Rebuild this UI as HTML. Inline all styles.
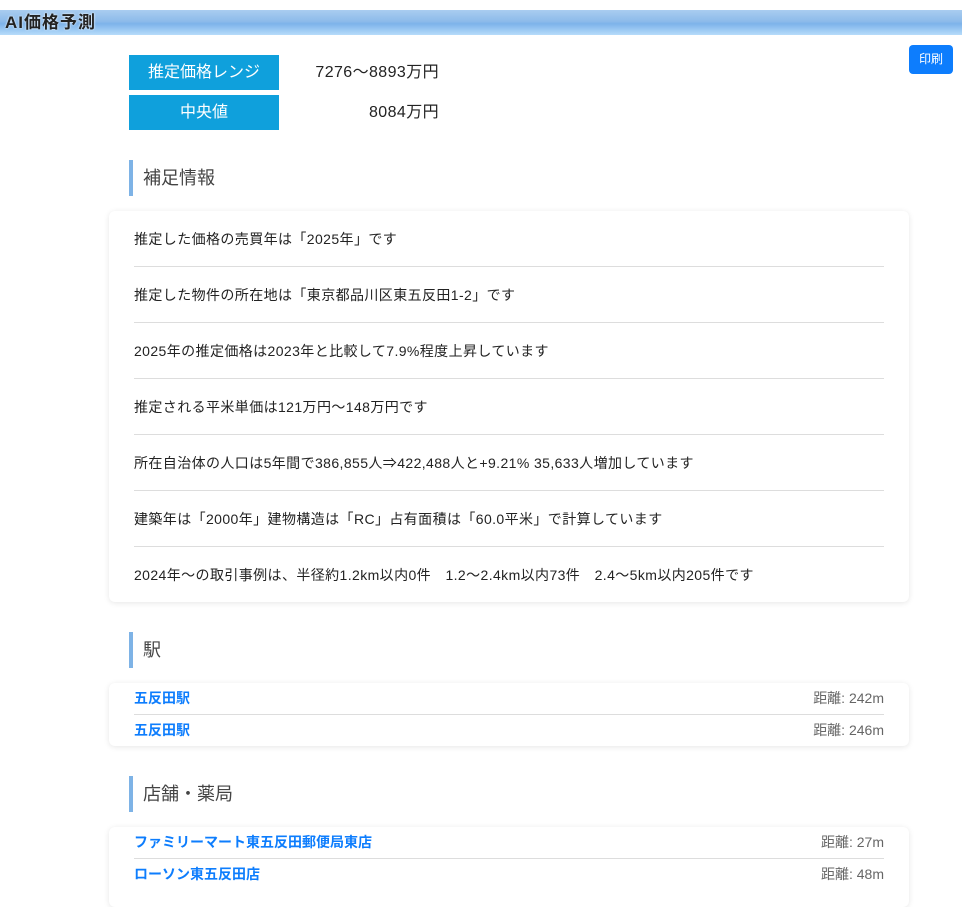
<!DOCTYPE html>
<html><head><meta charset="utf-8"><style>
*{margin:0;padding:0;box-sizing:border-box}
body{width:962px;height:889px;overflow:hidden;background:#fff;font-family:"Liberation Sans","Noto Sans CJK JP",sans-serif;color:#333;position:relative}
.hdr{position:absolute;left:0;top:10px;width:962px;height:25px;background:linear-gradient(#a9cdf0 0%,#8dbbea 45%,#7db3ea 55%,#b6dcfa 100%);font-weight:bold;font-size:17px;line-height:25px;padding-left:5px;color:#222;text-shadow:0 0 2px #fff;letter-spacing:1px}
.print{position:absolute;left:909px;top:45px;width:44px;height:29px;background:#0d7dfd;color:#fff;border-radius:4px;font-size:12px;line-height:29px;text-align:center}
.lab{position:absolute;left:129px;width:150px;height:35px;background:#0fa0dc;color:#fff;font-size:16px;line-height:35px;text-align:center}
.val{position:absolute;left:280px;width:159px;text-align:right;font-size:16px;line-height:35px;color:#222;letter-spacing:0.4px}
.sec{position:absolute;left:129px;height:36px;border-left:4px solid #7eb3e6;padding-left:10px;font-size:18px;line-height:36px;color:#444}
.card{position:absolute;left:109px;width:800px;background:#fff;border-radius:6px;box-shadow:0 1px 6px rgba(0,0,0,.1);padding:0 25px}
.row{height:56px;line-height:56px;font-size:14px;color:#222;border-bottom:1px solid #ddd;letter-spacing:0.4px}
.row:last-child{border-bottom:none}
.r2{height:32px;line-height:31px;font-size:14px;border-bottom:1px solid #ddd;display:flex;justify-content:space-between}
.r2:last-child{border-bottom:none}
.r2 a{color:#0d7dfd;font-weight:bold;text-decoration:none}
.r2 span{color:#666}
</style></head><body>
<div class="hdr">AI価格予測</div>
<div class="print">印刷</div>
<div class="lab" style="top:55px">推定価格レンジ</div><div class="val" style="top:55px">7276～8893万円</div>
<div class="lab" style="top:95px">中央値</div><div class="val" style="top:95px">8084万円</div>
<div class="sec" style="top:160px">補足情報</div>
<div class="card" style="top:211px;height:391px">
<div class="row">推定した価格の売買年は「2025年」です</div>
<div class="row">推定した物件の所在地は「東京都品川区東五反田1-2」です</div>
<div class="row">2025年の推定価格は2023年と比較して7.9%程度上昇しています</div>
<div class="row">推定される平米単価は121万円～148万円です</div>
<div class="row">所在自治体の人口は5年間で386,855人⇒422,488人と+9.21% 35,633人増加しています</div>
<div class="row">建築年は「2000年」建物構造は「RC」占有面積は「60.0平米」で計算しています</div>
<div class="row">2024年～の取引事例は、半径約1.2km以内0件　1.2～2.4km以内73件　2.4～5km以内205件です</div>
</div>
<div class="sec" style="top:632px">駅</div>
<div class="card" style="top:683px;height:63px">
<div class="r2"><a>五反田駅</a><span>距離: 242m</span></div>
<div class="r2"><a>五反田駅</a><span>距離: 246m</span></div>
</div>
<div class="sec" style="top:776px">店舗・薬局</div>
<div class="card" style="top:827px;height:80px">
<div class="r2"><a>ファミリーマート東五反田郵便局東店</a><span>距離: 27m</span></div>
<div class="r2"><a>ローソン東五反田店</a><span>距離: 48m</span></div>
</div>
</body></html>
